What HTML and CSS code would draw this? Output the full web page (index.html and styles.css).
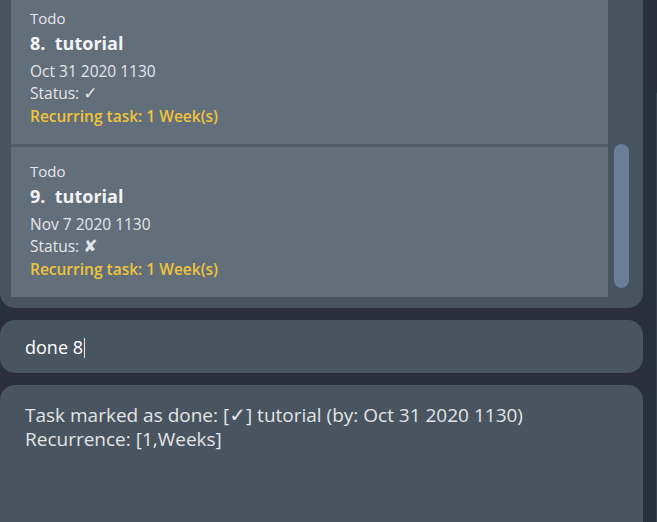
FILE: index.html
```html
<!DOCTYPE html>
<html lang="en">
<head>
<meta charset="utf-8">
<title>Task list</title>
<link rel="stylesheet" href="styles.css">
</head>
<body>
<div class="app">
  <main class="column">
    <section class="list-panel">
      <div class="list">
        <article class="card">
          <div class="type">Todo</div>
          <div class="title">8.&nbsp; tutorial</div>
          <div class="date">Oct 31 2020 1130</div>
          <div class="status">Status: <span class="glyph">✓</span></div>
          <div class="recur">Recurring task: 1 Week(s)</div>
        </article>
        <article class="card">
          <div class="type">Todo</div>
          <div class="title">9.&nbsp; tutorial</div>
          <div class="date">Nov 7 2020 1130</div>
          <div class="status">Status: <span class="glyph">✘</span></div>
          <div class="recur">Recurring task: 1 Week(s)</div>
        </article>
      </div>
      <div class="scrollbar"><div class="thumb"></div></div>
    </section>
    <div class="command"><span class="cmd-text">done 8</span><span class="caret"></span></div>
    <div class="result">
      <div>Task marked as done: [<span class="glyph">✓</span>] tutorial (by: Oct 31 2020 1130)</div>
      <div>Recurrence: [1,Weeks]</div>
    </div>
  </main>
  <div class="edge"></div>
</div>
</body>
</html>
```
FILE: styles.css
```css
* { box-sizing: border-box; }
html, body {
  margin: 0;
  padding: 0;
  height: 100%;
  background: #29303b;
  font-family: "Open Sans", "Noto Sans", "DejaVu Sans", sans-serif;
  overflow: hidden;
}
.app {
  display: flex;
  height: 522px;
}
.column {
  width: 643px;
  display: flex;
  flex-direction: column;
}
.edge {
  margin-left: 13px;
  margin-top: 93px;
  width: 1px;
  background: #3a4350;
}
.list-panel {
  height: 308px;
  flex: none;
  display: flex;
  overflow: hidden;
  background: #47535f;
  border-radius: 0 0 15px 15px;
  padding-left: 11px;
}
.list {
  width: 597px;
  margin-top: -6px;
  display: flex;
  flex-direction: column;
  gap: 3px;
  background: #505b67;
  align-self: flex-start;
}
.card {
  height: 150px;
  background: #636e7b;
  padding: 14px 0 0 19px;
  color: #e3e6e9;
}
.type {
  font-size: 15px;
  line-height: 20px;
}
.title {
  font-size: 18px;
  font-weight: 700;
  line-height: 27px;
  margin-top: 2px;
  color: #f2f3f4;
}
.date, .status, .recur {
  font-size: 15.5px;
  line-height: 22.5px;
}
.date { margin-top: 2.5px; }
.recur {
  font-weight: 600;
  color: #efc43a;
}
.glyph {
  font-family: "DejaVu Sans", sans-serif;
}
.status .glyph {
  font-size: 17px;
}
.scrollbar {
  width: 35px;
  padding-left: 6px;
}
.thumb {
  width: 15px;
  height: 144px;
  margin-top: 144px;
  background: #6b7d97;
  border-radius: 8px;
}
.command {
  margin-top: 12px;
  height: 53px;
  flex: none;
  background: #48545f;
  border-radius: 15px;
  padding-left: 25px;
  display: flex;
  align-items: center;
  color: #ffffff;
  font-size: 18px;
}
.caret {
  width: 1px;
  height: 20px;
  background: #e6e6e6;
  margin-left: 1px;
  margin-top: 2px;
}
.result {
  margin-top: 12px;
  flex: 1;
  background: #48545f;
  border-radius: 15px 15px 0 0;
  padding: 19px 25px 0;
  color: #e2e4e6;
  font-size: 19px;
  line-height: 23.5px;
}
.result .glyph {
  font-size: 20px;
}
```
